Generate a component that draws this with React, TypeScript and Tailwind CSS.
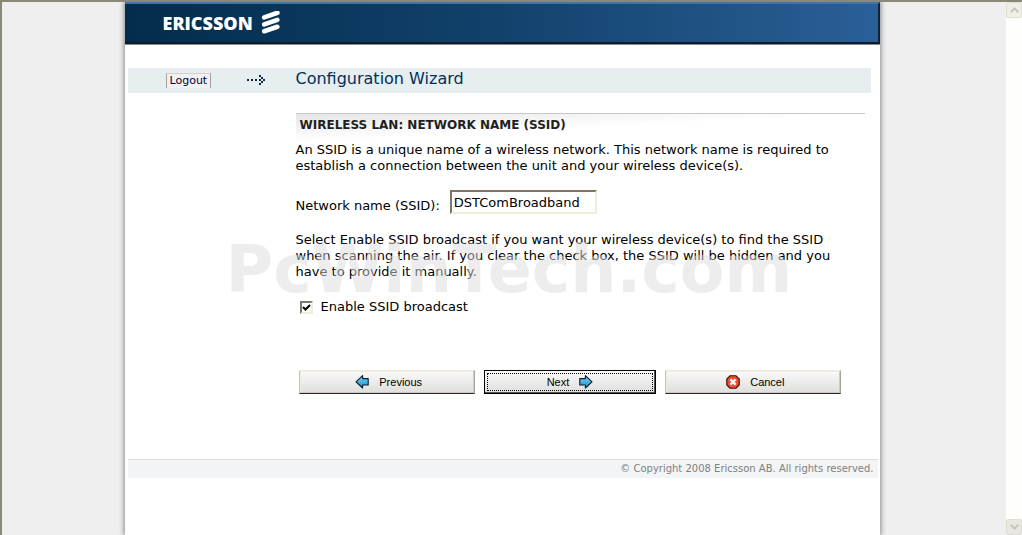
import { useState } from "react";
import type { ReactNode } from "react";

const BUTTON_BASE =
  "flex h-6 min-w-0 flex-1 items-center justify-center gap-[10px] bg-linear-to-b from-[#fafafa] to-[#dededc] font-['Liberation_Sans',sans-serif] text-[11px] text-black";

function EricssonMark() {
  return (
    <svg width="20" height="24" viewBox="0 0 20 24" fill="none" stroke="#fff" strokeWidth="4.6" strokeLinecap="round" aria-hidden="true">
      <path d="M3.2 6.4 L16.4 1.8" />
      <path d="M3.2 13.4 L16.4 8.8" />
      <path d="M3.2 20.2 L16.4 15.8" />
    </svg>
  );
}

function DottedArrow() {
  return (
    <svg width="20" height="11" viewBox="0 0 20 11" fill="#0a2a44" shapeRendering="crispEdges" aria-hidden="true">
      <path d="M1 4h2v2H1zM5 4h2v2H5zM9 4h2v2H9zM13 0h2v2h-2zM15 2h2v2h-2zM17 4h2v2h-2zM15 6h2v2h-2zM13 8h2v2h-2zM13 4h2v2h-2z" />
    </svg>
  );
}

function ArrowIcon({ flip }: { flip?: boolean }) {
  return (
    <svg width="14" height="14" viewBox="0 0 14 14" className={flip ? "-scale-x-100" : ""} aria-hidden="true">
      <defs>
        <linearGradient id="arrowFill" x1="0" y1="0" x2="0" y2="1">
          <stop offset="0" stopColor="#7ad6f8" />
          <stop offset="1" stopColor="#1c8fca" />
        </linearGradient>
      </defs>
      <path d="M.8 3.6h5.6v-3l6.6 6.2l-6.6 6.2v-3h-5.6z" fill="url(#arrowFill)" stroke="#0b1a2b" strokeWidth="1.1" strokeLinejoin="round" />
    </svg>
  );
}

function CancelIcon() {
  return (
    <svg width="14" height="14" viewBox="0 0 14 14" aria-hidden="true">
      <path d="M4 .8h6l3.2 3.2v6l-3.2 3.2h-6l-3.2-3.2v-6z" fill="#f04a35" stroke="#3a0d0a" strokeWidth="1.1" />
      <path d="M4.4 4.4l5.2 5.2M9.6 4.4l-5.2 5.2" stroke="#fff" strokeWidth="2.2" />
    </svg>
  );
}

function WizardButton({ children }: { children: ReactNode }) {
  return (
    <button type="button" className={`${BUTTON_BASE} border border-t-[#efebde] border-r-[#aaa594] border-b-[#2a2432] border-l-[#c9c3b4] pl-1 shadow-[inset_-1px_-1px_0_#cfcbbf,inset_1px_1px_0_#efebde]`}>
      {children}
    </button>
  );
}

function ScrollBar() {
  return (
    <div className="flex w-4 shrink-0 flex-col justify-between bg-[#fefefa]" aria-hidden="true">
      <div className="flex h-4 items-center justify-center rounded-xs border border-[#dedfd2] bg-[#efefe8]">
        <svg width="9" height="6" viewBox="0 0 9 6" fill="none" stroke="#c5c5bd" strokeWidth="2">
          <path d="M.7 5.2L4.5 1.4L8.3 5.2" />
        </svg>
      </div>
      <div className="flex h-4 items-center justify-center rounded-xs border border-[#dedfd2] bg-[#e8e8e0]">
        <svg width="9" height="6" viewBox="0 0 9 6" fill="none" stroke="#c5c5bd" strokeWidth="2">
          <path d="M.7 .8L4.5 4.6L8.3 .8" />
        </svg>
      </div>
    </div>
  );
}

export default function App() {
  const [ssid, setSsid] = useState("DSTComBroadband");
  const [broadcast, setBroadcast] = useState(true);

  return (
    <div className="flex min-h-screen border-t-2 border-l-2 border-[#8b8878] bg-[#efefef] font-['DejaVu_Sans',sans-serif] text-[13px] leading-4 text-black">
      <div className="flex flex-1 justify-center pr-1">
        <div className="w-full max-w-[755px] bg-white shadow-[0_0_5px_1px_#888]">
          <header className="flex h-[42px] items-center gap-2 border-t-2 border-r-2 border-b-2 border-t-[#3f75a8] border-r-[#0d2238] border-b-[#0d1c2b] bg-linear-to-r from-[#032c4c] via-[#12426c] to-[#2a5f98] pl-[38px] shadow-[0_1px_0_#8a8a8a]">
            <span className="font-['Open_Sans',sans-serif] text-[18px] font-extrabold text-white">ERICSSON</span>
            <EricssonMark />
          </header>

          <div className="mt-6 mr-[9px] ml-[3px] flex h-[25px] items-center bg-[#e6eef0]">
            <div className="flex w-[168px] shrink-0 items-center gap-[35px] pl-[38px]">
              <a href="#logout" className="border-x border-t border-[#a9a29c] border-t-[#d5d0cc] bg-[#f2f0f0] px-[3px] text-[11px] leading-[14px] text-[#000040]">
                Logout
              </a>
              <DottedArrow />
            </div>
            <h1 className="pb-1 text-base text-[#003057]">Configuration Wizard</h1>
          </div>

          <main className="relative mr-[15px] ml-[171px] pt-5">
            <h2 className="border-t border-[#c8c8c8] bg-linear-to-br from-[#e6e6e6] via-white to-white pt-[3px] pb-[9px] pl-1 text-xs font-bold text-[#231f20]">
              WIRELESS LAN: NETWORK NAME (SSID)
            </h2>
            <p className="max-w-[560px]">
              An SSID is a unique name of a wireless network. This network name is required to establish a connection between the unit and your wireless device(s).
            </p>
            <div className="mt-4 flex items-center gap-[10px]">
              <label htmlFor="ssid" className="pt-2">Network name (SSID):</label>
              <input
                id="ssid"
                value={ssid}
                onChange={(e) => setSsid(e.target.value)}
                className="h-6 w-[147px] border-2 border-t-[#7b7869] border-r-[#f0eddd] border-b-[#f0eddd] border-l-[#7b7869] bg-white px-[2px] text-[13px] outline-none"
              />
            </div>
            <p className="mt-[18px] max-w-[560px]">
              Select Enable SSID broadcast if you want your wireless device(s) to find the SSID when scanning the air. If you clear the check box, the SSID will be hidden and you have to provide it manually.
            </p>
            <div className="mt-[19px] flex items-center gap-2 pl-1">
              <span className="grid size-[13px]">
                <input
                  id="broadcast"
                  type="checkbox"
                  checked={broadcast}
                  onChange={(e) => setBroadcast(e.target.checked)}
                  className="col-start-1 row-start-1 size-[13px] appearance-none border-2 border-t-[#7b7869] border-r-[#f0eddd] border-b-[#f0eddd] border-l-[#7b7869] bg-white"
                />
                {broadcast && (
                  <svg width="9" height="9" viewBox="0 0 9 9" fill="none" stroke="#000" strokeWidth="2" className="pointer-events-none col-start-1 row-start-1 place-self-center" aria-hidden="true">
                    <path d="M1 4L3.5 6.5L8 2" />
                  </svg>
                )}
              </span>
              <label htmlFor="broadcast">Enable SSID broadcast</label>
            </div>

            <div className="mt-[55px] flex gap-[9px] pr-[23px] pl-[3px]">
              <WizardButton>
                <ArrowIcon flip />
                Previous
              </WizardButton>
              <button type="button" className={`${BUTTON_BASE} border border-black shadow-[inset_-1px_-1px_0_#555] outline-1 -outline-offset-4 outline-black outline-dotted`}>
                Next
                <ArrowIcon />
              </button>
              <WizardButton>
                <CancelIcon />
                Cancel
              </WizardButton>
            </div>

            {/* Watermark lies over the form text */}
            <div className="pointer-events-none absolute top-[141px] -left-[70px] font-['DejaVu_Sans',sans-serif] text-[65px] leading-[72px] font-bold whitespace-nowrap text-[#dbdbdb]/50">
              PcWinTech.com
            </div>
          </main>

          <footer className="mt-[65px] mr-[2px] ml-[3px] border-t border-[#dcdcdc] bg-[#f3f4f6] pr-1 text-right text-[10px] leading-[18px] text-[#808080]">
            © Copyright 2008 Ericsson AB. All rights reserved.
          </footer>
        </div>
      </div>
      <ScrollBar />
    </div>
  );
}
